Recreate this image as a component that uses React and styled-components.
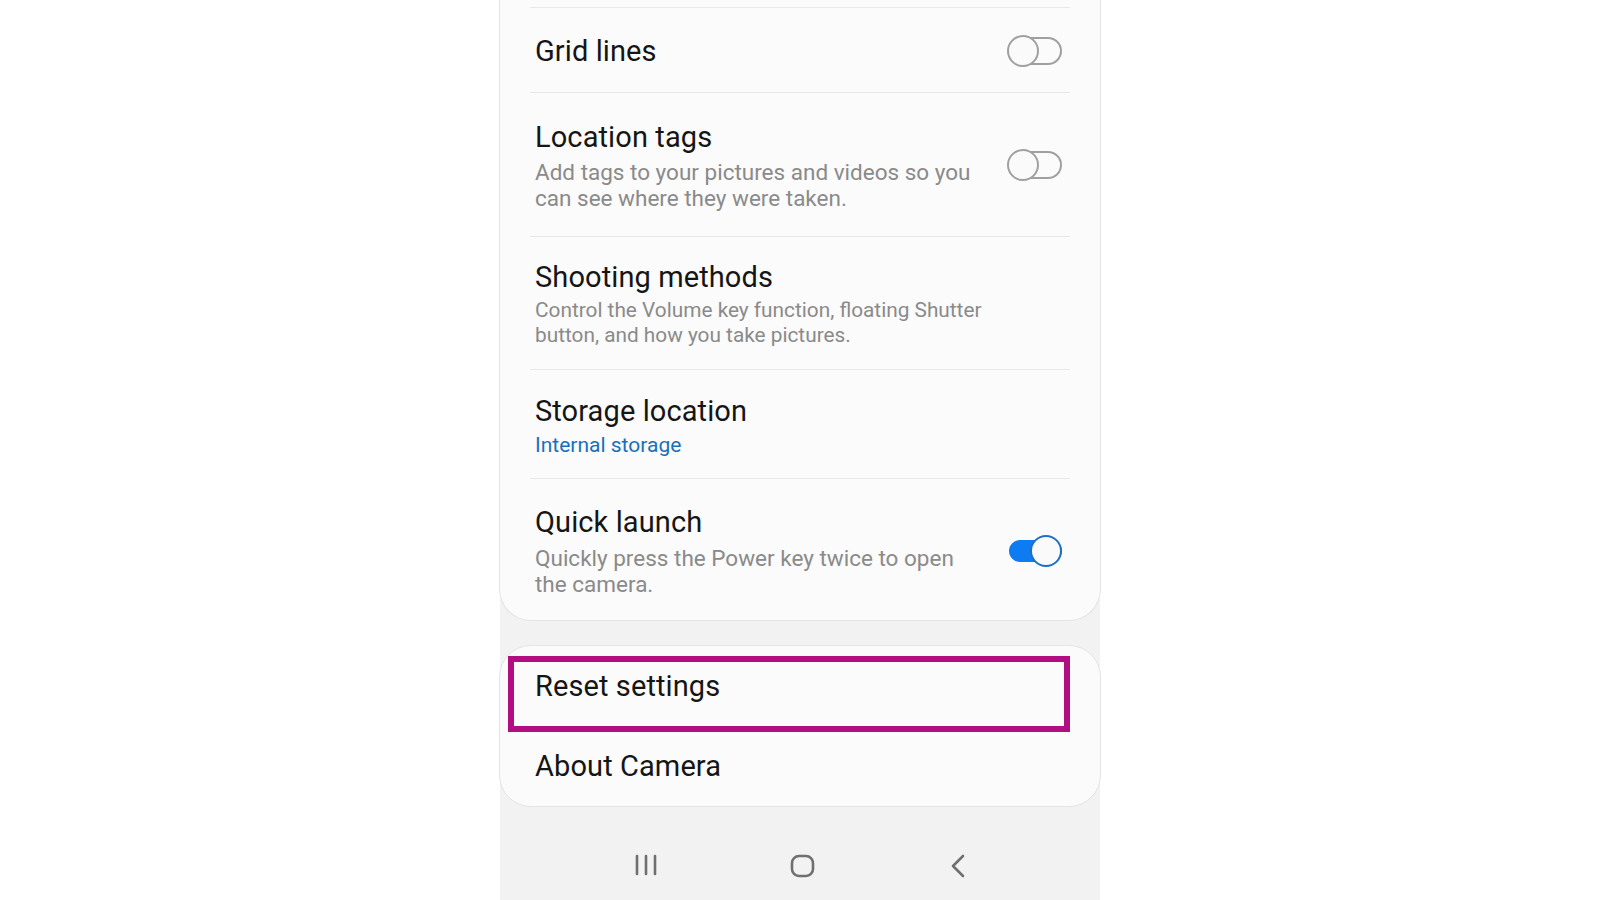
import React from 'react';
import styled, { createGlobalStyle } from 'styled-components';

const GlobalStyle = createGlobalStyle`
  html, body {
    margin: 0;
    padding: 0;
    background: #ffffff;
  }
  body {
    font-family: Roboto, "Noto Sans", "Liberation Sans", sans-serif;
  }
`;

const Page = styled.div`
  display: flex;
  justify-content: center;
  height: 900px;
  overflow: hidden;
`;

const Phone = styled.div`
  width: 600px;
  height: 900px;
  background: #f2f2f2;
  display: flex;
  flex-direction: column;
`;

const Card = styled.div`
  position: relative;
  background: #fbfbfb;
  border: 1px solid #e4e4e4;
  border-top: ${p => (p.$cut ? 'none' : '1px solid #e4e4e4')};
  border-radius: ${p => (p.$cut ? '0 0 32px 32px' : '32px')};
  padding-top: ${p => p.$padTop || 0}px;
  margin-top: ${p => p.$gap || 0}px;
  box-sizing: border-box;
  margin-left: -1px;
  margin-right: -1px;
`;

const Row = styled.div`
  position: relative;
  display: flex;
  align-items: center;
  margin: 0 30px;
  padding: ${p => p.$pad || '24px 8px 22px 5px'};
  border-top: ${p => (p.$line ? '1px solid #e8e8e8' : 'none')};
  min-height: ${p => p.$min || 0}px;
  box-sizing: border-box;
`;

const Text = styled.div`
  flex: 1;
  min-width: 0;
  padding-right: 20px;
`;

const Title = styled.div`
  font-size: 29px;
  line-height: 36px;
  color: #151515;
  letter-spacing: 0.1px;
`;

const Sub = styled.div`
  margin-top: ${p => p.$mt ?? 5}px;
  font-size: ${p => p.$size || 22.5}px;
  line-height: ${p => p.$lh || 26}px;
  color: ${p => (p.$link ? '#1a6fbd' : '#8a8a8a')};
  max-width: ${p => p.$max || 445}px;
`;

const Track = styled.div`
  position: relative;
  flex: none;
  width: 55px;
  height: 32px;
`;

const Rail = styled.div`
  position: absolute;
  left: 2px;
  right: 0;
  top: ${p => (p.$on ? 5 : 2)}px;
  bottom: ${p => (p.$on ? 5 : 2)}px;
  border-radius: 16px;
  box-sizing: border-box;
  background: ${p => (p.$on ? '#0d7cf2' : 'transparent')};
  border: 2px solid ${p => (p.$on ? '#0d7cf2' : '#a0a0a0')};
`;

const Knob = styled.div`
  position: absolute;
  top: 0;
  left: ${p => (p.$on ? '23px' : '0')};
  width: 32px;
  height: 32px;
  border-radius: 50%;
  box-sizing: border-box;
  background: #fafafa;
  border: 2px solid ${p => (p.$on ? '#1f6fc4' : '#a0a0a0')};
`;

const Highlight = styled.div`
  position: absolute;
  left: -22px;
  right: 0;
  top: 10px;
  height: 76px;
  border: 6px solid #b30d82;
  box-sizing: border-box;
  pointer-events: none;
`;

const NavBar = styled.div`
  flex: 1;
  display: flex;
  align-items: flex-start;
  justify-content: center;
  padding-top: 47px;
  padding-left: 4px;
`;

const NavSlot = styled.div`
  width: 156px;
  display: flex;
  justify-content: center;
  color: #6f6f6f;
`;

const Toggle = ({ on }) => (
  <Track>
    <Rail $on={on} />
    <Knob $on={on} />
  </Track>
);

const RecentIcon = () => (
  <svg width="24" height="22" viewBox="0 0 24 22" fill="none" stroke="currentColor" strokeWidth="2.6" strokeLinecap="round">
    <line x1="3" y1="2" x2="3" y2="20" />
    <line x1="12" y1="2" x2="12" y2="20" />
    <line x1="21" y1="2" x2="21" y2="20" />
  </svg>
);

const HomeIcon = () => (
  <svg width="25" height="24" viewBox="0 0 25 24" fill="none" stroke="currentColor" strokeWidth="2.6">
    <rect x="2" y="2" width="21" height="20" rx="7" />
  </svg>
);

const BackIcon = () => (
  <svg width="16" height="24" viewBox="0 0 16 24" fill="none" stroke="currentColor" strokeWidth="2.6" strokeLinecap="round" strokeLinejoin="round">
    <polyline points="13,2 3,12 13,22" />
  </svg>
);

export default function App() {
  return (
    <>
      <GlobalStyle />
      <Page>
        <Phone>
          <Card $cut $padTop={7}>
            <Row $line $pad="25px 8px 23px 5px">
              <Text>
                <Title>Grid lines</Title>
              </Text>
              <Toggle on={false} />
            </Row>
            <Row $line $pad="26px 8px 25px 5px">
              <Text>
                <Title>Location tags</Title>
                <Sub $mt={4}>Add tags to your pictures and videos so you can see where they were taken.</Sub>
              </Text>
              <Toggle on={false} />
            </Row>
            <Row $line $pad="22px 8px 21px 5px">
              <Text>
                <Title>Shooting methods</Title>
                <Sub $size={20.8} $lh={25} $mt={3} $max={470}>
                  Control the Volume key function, floating Shutter button, and how you take pictures.
                </Sub>
              </Text>
            </Row>
            <Row $line $pad="23px 8px 20px 5px">
              <Text>
                <Title>Storage location</Title>
                <Sub $link $size={21} $mt={3}>Internal storage</Sub>
              </Text>
            </Row>
            <Row $line $pad="25px 8px 23px 5px">
              <Text>
                <Title>Quick launch</Title>
                <Sub $max={438}>Quickly press the Power key twice to open the camera.</Sub>
              </Text>
              <Toggle on />
            </Row>
          </Card>

          <Card $gap={24}>
            <Row $min={80} $pad="0 8px 0 5px">
              <Text>
                <Title>Reset settings</Title>
              </Text>
              <Highlight />
            </Row>
            <Row $min={80} $pad="0 8px 0 5px">
              <Text>
                <Title>About Camera</Title>
              </Text>
            </Row>
          </Card>

          <NavBar>
            <NavSlot><RecentIcon /></NavSlot>
            <NavSlot><HomeIcon /></NavSlot>
            <NavSlot><BackIcon /></NavSlot>
          </NavBar>
        </Phone>
      </Page>
    </>
  );
}
